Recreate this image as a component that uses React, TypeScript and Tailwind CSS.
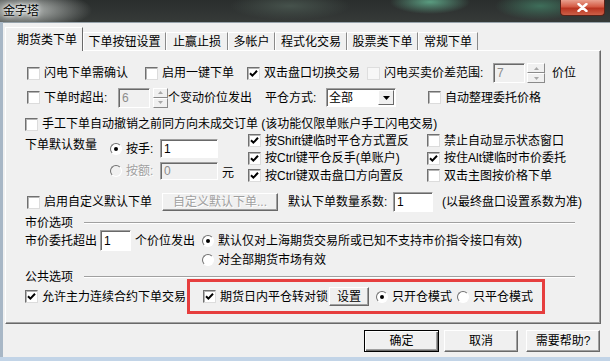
import React from "react";

const FONT = "font-['Liberation_Sans','Noto_Sans_CJK_SC',sans-serif]";

function Check({ on, flat }: { on?: boolean; flat?: boolean }) {
  return (
    <span
      className={`flex h-[13px] w-[13px] shrink-0 items-center justify-center border ${
        flat
          ? "border-[#dedede] bg-[#f7f7f7]"
          : "border-t-[#707070] border-l-[#707070] border-r-[#dcdcdc] border-b-[#dcdcdc] bg-white shadow-[inset_1px_1px_0_#b4b4b4]"
      }`}
    >
      {on && (
        <svg width="11" height="11" viewBox="0 0 11 11">
          <path d="M2 5.2 L4.4 7.6 L9 2.8" stroke="#000" strokeWidth="2" fill="none" />
        </svg>
      )}
    </span>
  );
}

function Radio({ on, disabled }: { on?: boolean; disabled?: boolean }) {
  return (
    <span
      className={`flex h-[12px] w-[12px] shrink-0 items-center justify-center rounded-full border border-t-[#707070] border-l-[#707070] border-r-white border-b-white ${
        disabled ? "bg-[#f0f0f0]" : "bg-white"
      }`}
    >
      {on && <span className="h-[4px] w-[4px] rounded-full bg-black" />}
    </span>
  );
}

function CheckItem({
  on,
  flat,
  w = "",
  children,
}: {
  on?: boolean;
  flat?: boolean;
  w?: string;
  children: React.ReactNode;
}) {
  return (
    <span className={`flex shrink-0 items-center gap-[4px] whitespace-nowrap ${w}`}>
      <Check on={on} flat={flat} />
      <span>{children}</span>
    </span>
  );
}

function RadioItem({
  on,
  disabled,
  w = "",
  children,
}: {
  on?: boolean;
  disabled?: boolean;
  w?: string;
  children: React.ReactNode;
}) {
  return (
    <span className={`flex shrink-0 items-center gap-[4px] whitespace-nowrap ${w}`}>
      <Radio on={on} disabled={disabled} />
      <span className={disabled ? "text-[#a0a0a0] [text-shadow:1px_1px_0_#fff]" : ""}>
        {children}
      </span>
    </span>
  );
}

function Field({ cls, value, disabled }: { cls: string; value: string; disabled?: boolean }) {
  return (
    <span
      className={`flex shrink-0 items-center border border-t-[#a0a0a0] border-l-[#a0a0a0] border-r-white border-b-white pl-[3px] shadow-[inset_1px_1px_0_#696969] ${cls} ${
        disabled ? "bg-[#f0f0f0] text-[#8c8c8c]" : "bg-white"
      }`}
    >
      {value}
    </span>
  );
}

function Spin({ cls }: { cls: string }) {
  const part =
    "flex flex-1 items-center justify-center border border-t-white border-l-white border-r-[#8a8a8a] border-b-[#8a8a8a] bg-[#f0f0f0]";
  return (
    <span className={`flex shrink-0 flex-col ${cls}`}>
      <span className={part}>
        <svg width="5" height="3" viewBox="0 0 5 3">
          <path d="M0 3 L2.5 0 L5 3Z" fill="#a8a8a8" />
        </svg>
      </span>
      <span className={part}>
        <svg width="5" height="3" viewBox="0 0 5 3">
          <path d="M0 0 L2.5 3 L5 0Z" fill="#a8a8a8" />
        </svg>
      </span>
    </span>
  );
}

function Btn({
  cls,
  children,
  def,
  disabled,
}: {
  cls: string;
  children: React.ReactNode;
  def?: boolean;
  disabled?: boolean;
}) {
  return (
    <span
      className={`flex shrink-0 items-center justify-center whitespace-nowrap bg-[#f0f0f0] ${cls} ${
        def
          ? "border border-black shadow-[inset_1px_1px_0_#fff,inset_-1px_-1px_0_#696969,inset_-2px_-2px_0_#a0a0a0]"
          : "border border-t-white border-l-white border-r-[#696969] border-b-[#696969] shadow-[inset_-1px_-1px_0_#a0a0a0]"
      } ${disabled ? "text-[#a0a0a0] [text-shadow:1px_1px_0_#fff]" : ""}`}
    >
      {children}
    </span>
  );
}

function GroupTitle({ children }: { children: React.ReactNode }) {
  return (
    <div className="flex h-[14px] items-center pl-[19px]">
      <span className="w-[59px] shrink-0">{children}</span>
      <span className="h-[2px] w-[491px] border-t border-t-[#a0a0a0] border-b border-b-white" />
    </div>
  );
}

const tabs = [
  { label: "下单按钮设置", w: "w-[83px]" },
  { label: "止赢止损", w: "w-[62px]" },
  { label: "多帐户", w: "w-[47px]" },
  { label: "程式化交易", w: "w-[72px]" },
  { label: "股票类下单", w: "w-[71px]" },
  { label: "常规下单", w: "w-[60px]" },
];

export default function App() {
  return (
    <div className={`flex h-[361px] w-[610px] flex-col overflow-hidden text-[12px] leading-[14px] text-black ${FONT}`}>
      {/* title bar */}
      <div className="flex h-[22px] shrink-0 items-start justify-between bg-[radial-gradient(ellipse_70px_20px_at_22px_10px,#c4c8c5,transparent),radial-gradient(ellipse_40px_12px_at_430px_2px,#5a9c80,transparent),radial-gradient(ellipse_45px_14px_at_540px_6px,#3e6e5a,transparent),radial-gradient(ellipse_60px_14px_at_290px_6px,#46524c,transparent),linear-gradient(#2a2e2d,#363a38)]">
        <span className="pl-[3px] pt-[4px] text-[12px] leading-[14px] [text-shadow:0_0_6px_#fff,0_0_3px_#fff]">
          金字塔
        </span>
        <span className="mr-[5px] flex h-[16px] w-[45px] items-center justify-center rounded-b-[4px] border border-t-0 border-[#5b2218] bg-[linear-gradient(#e9a08e,#d45a44_45%,#b93420_55%,#cc6048)]">
          <svg width="11" height="9" viewBox="0 0 11 9">
            <path d="M1.5 1 L9.5 8 M9.5 1 L1.5 8" stroke="#fff" strokeWidth="2.4" strokeLinecap="round" />
          </svg>
        </span>
      </div>

      <div className="flex flex-1">
        <div className="w-[3px] shrink-0 bg-[#a8b7c6]" />
        {/* client */}
        <div className="flex flex-1 flex-col border-t border-t-[#97a3ab] bg-[#f0f0f0] pt-[4px]">
          {/* tabs */}
          <div className="flex h-[23px] items-end pl-[2px]">
            <div className="relative z-10 -mb-px flex h-[24px] w-[78px] shrink-0 items-center border border-b-0 border-t-white border-l-white border-r-[#696969] bg-[#f0f0f0] pl-[11px] pt-[1px]">
              期货类下单
            </div>
            {tabs.map((t) => (
              <div
                key={t.label}
                className={`flex h-[18px] shrink-0 items-center justify-center border-t border-l border-r border-t-white border-l-white border-r-[#8a8a8a] pt-[1px] ${t.w}`}
              >
                {t.label}
              </div>
            ))}
          </div>

          {/* panel */}
          <div className="relative z-0 ml-[2px] flex h-[274px] w-[596px] shrink-0 flex-col border border-t-white border-l-white border-r-[#696969] border-b-[#696969] shadow-[inset_-1px_-1px_0_#a0a0a0]">
            {/* row 1 */}
            <div className="mt-[12px] flex h-[20px] items-center pl-[21px]">
              <CheckItem w="w-[118px]">闪电下单需确认</CheckItem>
              <CheckItem w="w-[102px]">启用一键下单</CheckItem>
              <CheckItem on w="w-[120px]">双击盘口切换交易</CheckItem>
              <CheckItem flat w="w-[126px]">闪电买卖价差范围:</CheckItem>
              <Field cls="h-[20px] w-[32px]" value="7" disabled />
              <span className="ml-[2px]">
                <Spin cls="h-[20px] w-[18px]" />
              </span>
              <span className="ml-[7px]">价位</span>
            </div>

            {/* row 2 */}
            <div className="mt-[4px] flex h-[21px] items-center pl-[21px]">
              <CheckItem w="w-[91px]">下单时超出:</CheckItem>
              <Field cls="h-[20px] w-[32px]" value="6" disabled />
              <span className="ml-[3px]">
                <Spin cls="h-[20px] w-[15px]" />
              </span>
              <span className="w-[97px] shrink-0 whitespace-nowrap">个变动价位发出</span>
              <span className="w-[61px] shrink-0 whitespace-nowrap">平仓方式:</span>
              <span className="flex h-[19px] w-[70px] shrink-0 items-center border border-t-[#a0a0a0] border-l-[#a0a0a0] border-r-white border-b-white bg-white shadow-[inset_1px_1px_0_#696969]">
                <span className="flex-1 pl-[2px]">全部</span>
                <span className="mr-px flex h-[15px] w-[16px] items-center justify-center border border-t-white border-l-white border-r-[#696969] border-b-[#696969] bg-[#f0f0f0]">
                  <svg width="7" height="4" viewBox="0 0 7 4">
                    <path d="M0 0 L7 0 L3.5 4Z" fill="#000" />
                  </svg>
                </span>
              </span>
              <span className="ml-[32px]">
                <CheckItem>自动整理委托价格</CheckItem>
              </span>
            </div>

            {/* row 3 */}
            <div className="mt-[8px] flex h-[16px] items-center pl-[19px]">
              <CheckItem>手工下单自动撤销之前同方向未成交订单 (该功能仅限单账户手工闪电交易)</CheckItem>
            </div>

            {/* row 4 */}
            <div className="flex h-[52px] items-start pl-[19px]">
              <span className="mt-[6px] flex h-[14px] w-[85px] shrink-0 items-center">下单默认数量</span>
              <div className="flex w-[138px] shrink-0 flex-col">
                <div className="mt-[7px] flex h-[19px] items-center">
                  <RadioItem on w="w-[50px]">按手:</RadioItem>
                  <Field cls="h-[19px] w-[58px]" value="1" />
                </div>
                <div className="mt-[4px] flex h-[18px] items-center">
                  <RadioItem disabled w="w-[50px]">按额:</RadioItem>
                  <Field cls="h-[18px] w-[58px]" value="0" disabled />
                  <span className="ml-[4px] mt-[4px]">元</span>
                </div>
              </div>
              <div className="flex w-[179px] shrink-0 flex-col">
                <div className="flex h-[17.5px] items-center">
                  <CheckItem on>按Shift键临时平仓方式置反</CheckItem>
                </div>
                <div className="flex h-[17.5px] items-center">
                  <CheckItem on>按Ctrl键平仓反手(单账户)</CheckItem>
                </div>
                <div className="flex h-[17.5px] items-center">
                  <CheckItem on>按Ctrl键双击盘口方向置反</CheckItem>
                </div>
              </div>
              <div className="flex flex-col">
                <div className="flex h-[17.5px] items-center">
                  <CheckItem>禁止自动显示状态窗口</CheckItem>
                </div>
                <div className="flex h-[17.5px] items-center">
                  <CheckItem on>按住Alt键临时市价委托</CheckItem>
                </div>
                <div className="flex h-[17.5px] items-center">
                  <CheckItem>双击主图按价格下单</CheckItem>
                </div>
              </div>
            </div>

            {/* row 5 */}
            <div className="mt-[8px] flex h-[20px] items-center pl-[21px]">
              <CheckItem w="w-[135px]">启用自定义默认下单</CheckItem>
              <Btn cls="h-[18px] w-[116px]" disabled>
                自定义默认下单...
              </Btn>
              <span className="ml-[10px] w-[105px] shrink-0 whitespace-nowrap">默认下单数量系数:</span>
              <Field cls="h-[20px] w-[40px]" value="1" />
              <span className="ml-[9px] whitespace-nowrap">(以最终盘口设置系数为准)</span>
            </div>

            {/* 市价选项 */}
            <div className="mt-[4px]">
              <GroupTitle>市价选项</GroupTitle>
            </div>
            <div className="flex h-[21px] items-center pl-[19px]">
              <span className="w-[75px] shrink-0 whitespace-nowrap">市价委托超出</span>
              <Field cls="h-[21px] w-[31px]" value="1" />
              <span className="ml-[4px] w-[67px] shrink-0 whitespace-nowrap">个价位发出</span>
              <RadioItem on>默认仅对上海期货交易所或已知不支持市价指令接口有效)</RadioItem>
            </div>
            <div className="mt-px flex h-[16px] items-center pl-[196px]">
              <RadioItem>对全部期货市场有效</RadioItem>
            </div>

            {/* 公共选项 */}
            <div className="mt-[2px]">
              <GroupTitle>公共选项</GroupTitle>
            </div>
            <div className="-mt-[5px] flex h-[35px] items-center pl-[19px]">
              <CheckItem on w="w-[162px]">允许主力连续合约下单交易</CheckItem>
              <div className="flex h-[35px] w-[358px] shrink-0 items-center border-[3px] border-[#e63e3e] pl-[13px]">
                <CheckItem on w="w-[126px]">期货日内平仓转对锁</CheckItem>
                <Btn cls="h-[19px] w-[40px]">设置</Btn>
                <span className="ml-[7px]">
                  <RadioItem on w="w-[81px]">只开仓模式</RadioItem>
                </span>
                <RadioItem>只平仓模式</RadioItem>
              </div>
            </div>
          </div>

          {/* buttons */}
          <div className="mt-[6px] flex h-[22px] items-center pl-[361px]">
            <Btn cls="h-[22px] w-[75px]" def>
              确定
            </Btn>
            <span className="ml-[5px]">
              <Btn cls="h-[22px] w-[74px]">取消</Btn>
            </span>
            <span className="ml-[8px]">
              <Btn cls="h-[22px] w-[74px]">需要帮助?</Btn>
            </span>
          </div>
        </div>
      </div>
      <div className="h-[4px] shrink-0 bg-[#c2d4e7]" />
    </div>
  );
}
